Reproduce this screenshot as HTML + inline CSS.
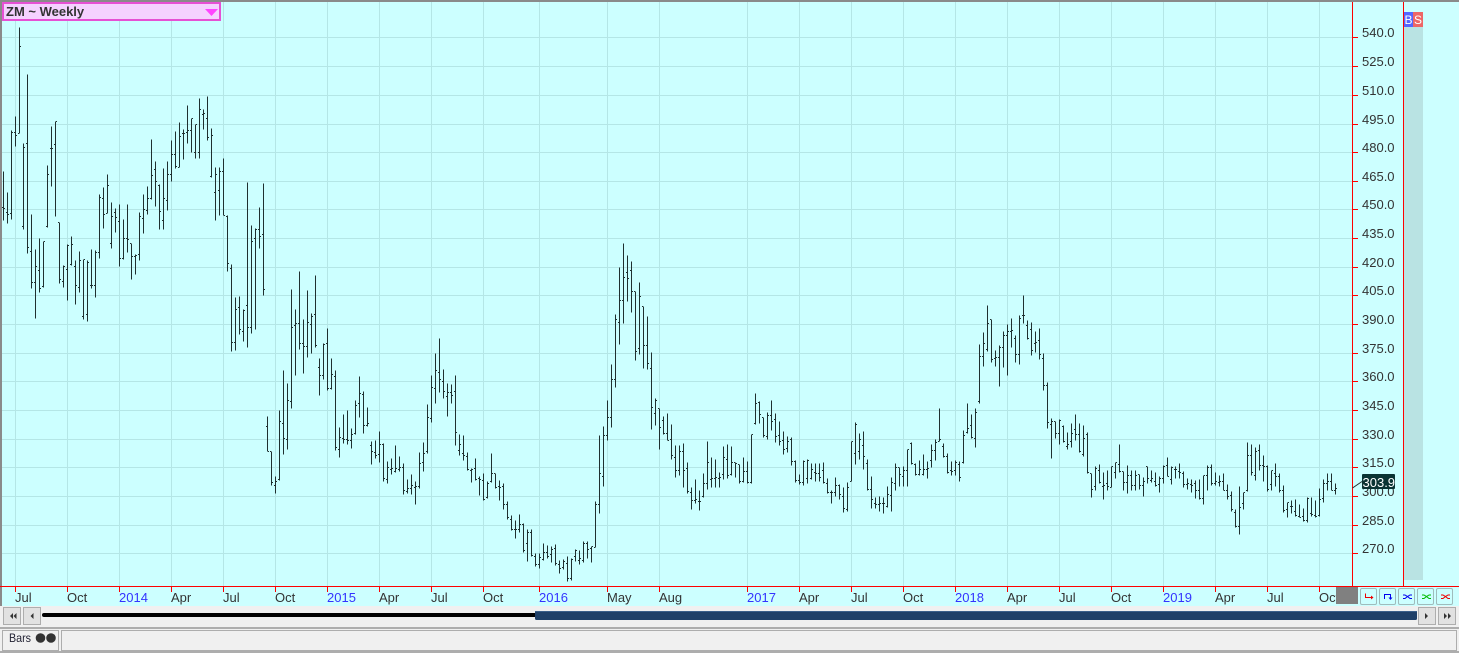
<!DOCTYPE html>
<html>
<head>
<meta charset="utf-8">
<title>ZM Weekly</title>
<style>
html,body{margin:0;padding:0;width:1459px;height:653px;overflow:hidden;background:#f0f0f0}
svg{display:block}
text{font-family:"Liberation Sans",sans-serif}
</style>
</head>
<body>
<svg width="1459" height="653" viewBox="0 0 1459 653" xmlns="http://www.w3.org/2000/svg">
<rect width="1459" height="653" fill="#f0f0f0"/>
<rect x="0" y="0" width="1459" height="606" fill="#ccffff"/>
<rect x="0" y="0" width="1459" height="2" fill="#8a8a8a"/>
<rect x="0" y="0" width="2" height="606" fill="#8a8a8a"/>
<path shape-rendering="crispEdges" stroke="#b4e6e6" stroke-width="1" fill="none" d="M15.5 2V586M67.5 2V586M119.5 2V586M171.5 2V586M223.5 2V586M275.5 2V586M327.5 2V586M379.5 2V586M431.5 2V586M483.5 2V586M539.5 2V586M607.5 2V586M659.5 2V586M747.5 2V586M799.5 2V586M851.5 2V586M903.5 2V586M955.5 2V586M1007.5 2V586M1059.5 2V586M1111.5 2V586M1163.5 2V586M1215.5 2V586M1267.5 2V586M1319.5 2V586M2 37.5H1352M2 66.5H1352M2 95.5H1352M2 124.5H1352M2 152.5H1352M2 181.5H1352M2 209.5H1352M2 238.5H1352M2 267.5H1352M2 295.5H1352M2 324.5H1352M2 353.5H1352M2 381.5H1352M2 410.5H1352M2 439.5H1352M2 467.5H1352M2 496.5H1352M2 525.5H1352M2 553.5H1352"/>
<g transform="translate(0,.5)">
<path shape-rendering="crispEdges" stroke="#1f2f2f" stroke-width="1" fill="none" d="M3.5 171V220M2 207h1M4 208h1M7.5 192V223M6 212h1M8 214h1M11.5 130V219M10 213h1M12 132h1M15.5 116V146M14 132h1M16 135h1M19.5 27V133M18 133h1M20 46h1M23.5 143V229M22 226h1M24 147h1M27.5 74V253M26 143h1M28 247h1M31.5 214V288M30 251h1M32 282h1M35.5 249V318M34 282h1M36 266h1M39.5 238V292M38 270h1M40 288h1M43.5 241V287M42 286h1M44 241h1M47.5 165V227M46 226h1M48 174h1M51.5 126V186M50 148h1M52 148h1M55.5 121V216M54 144h1M56 121h1M59.5 222V283M58 222h1M60 279h1M63.5 265V287M62 281h1M64 266h1M67.5 244V300M66 269h1M68 245h1M71.5 236V265M70 264h1M72 244h1M75.5 260V304M74 266h1M76 285h1M79.5 251V292M78 287h1M80 260h1M83.5 259V319M82 316h1M84 259h1M87.5 260V321M86 314h1M88 262h1M91.5 249V288M90 285h1M92 285h1M95.5 250V297M94 285h1M96 252h1M99.5 194V258M98 252h1M100 197h1M103.5 187V228M102 198h1M104 214h1M107.5 174V213M106 213h1M108 185h1M111.5 202V248M110 243h1M112 216h1M115.5 208V232M114 212h1M116 217h1M119.5 204V266M118 221h1M120 258h1M123.5 219V259M122 258h1M124 238h1M127.5 204V252M126 238h1M128 239h1M131.5 243V279M130 243h1M132 256h1M135.5 254V274M134 256h1M136 255h1M139.5 212V260M138 254h1M140 216h1M143.5 194V233M142 218h1M144 209h1M147.5 186V214M146 210h1M148 198h1M151.5 139V199M150 198h1M152 175h1M155.5 161V206M154 169h1M156 181h1M159.5 184V229M158 185h1M160 211h1M163.5 168V229M162 220h1M164 198h1M167.5 161V210M166 200h1M168 174h1M171.5 140V181M170 174h1M172 154h1M175.5 131V168M174 154h1M176 166h1M179.5 122V167M178 167h1M180 136h1M183.5 129V159M182 133h1M184 133h1M187.5 105V143M186 132h1M188 130h1M191.5 118V152M190 130h1M192 118h1M195.5 124V158M194 152h1M196 124h1M199.5 98V158M198 152h1M200 109h1M203.5 109V129M202 114h1M204 113h1M207.5 96V140M206 118h1M208 137h1M211.5 128V177M210 176h1M212 135h1M215.5 167V220M214 192h1M216 174h1M219.5 167V215M218 190h1M220 171h1M223.5 158V215M222 171h1M224 215h1M227.5 215V271M226 216h1M228 263h1M231.5 264V351M230 268h1M232 342h1M235.5 297V350M234 342h1M236 309h1M239.5 296V334M238 307h1M240 329h1M243.5 309V341M242 331h1M244 310h1M247.5 182V347M246 305h1M248 327h1M251.5 225V333M250 327h1M252 241h1M255.5 228V329M254 238h1M256 229h1M259.5 207V248M258 229h1M260 236h1M263.5 183V295M262 234h1M264 289h1M267.5 416V451M266 426h1M268 451h1M271.5 451V485M270 451h1M272 482h1M275.5 476V493M274 485h1M276 481h1M279.5 410V480M278 479h1M280 421h1M283.5 370V454M282 423h1M284 438h1M287.5 383V449M286 439h1M288 400h1M291.5 289V408M290 401h1M292 327h1M295.5 309V375M294 325h1M296 323h1M299.5 271V349M298 323h1M300 343h1M303.5 319V373M302 343h1M304 346h1M307.5 290V357M306 346h1M308 322h1M311.5 313V353M310 324h1M312 316h1M315.5 275V347M314 314h1M316 345h1M319.5 358V395M318 367h1M320 375h1M323.5 343V379M322 375h1M324 344h1M327.5 328V390M326 343h1M328 388h1M331.5 358V389M330 388h1M332 374h1M335.5 370V450M334 376h1M336 447h1M339.5 427V457M338 449h1M340 437h1M343.5 414V443M342 438h1M344 439h1M347.5 410V444M346 439h1M348 440h1M351.5 428V448M350 440h1M352 434h1M355.5 400V434M354 433h1M356 405h1M359.5 376V417M358 403h1M360 393h1M363.5 391V433M362 394h1M364 425h1M367.5 407V426M366 425h1M368 423h1M371.5 441V464M370 445h1M372 451h1M375.5 440V458M374 452h1M376 455h1M379.5 431V462M378 454h1M380 444h1M383.5 443V481M382 444h1M384 478h1M387.5 461V483M386 479h1M388 467h1M391.5 458V474M390 469h1M392 468h1M395.5 445V472M394 471h1M396 468h1M399.5 456V471M398 469h1M400 467h1M403.5 463V494M402 467h1M404 490h1M407.5 479V493M406 491h1M408 488h1M411.5 474V494M410 488h1M412 485h1M415.5 481V504M414 487h1M416 486h1M419.5 452V488M418 486h1M420 463h1M423.5 442V471M422 462h1M424 453h1M427.5 404V453M426 451h1M428 417h1M431.5 375V422M430 418h1M432 387h1M435.5 353V403M434 388h1M436 370h1M439.5 338V392M438 372h1M440 379h1M443.5 369V398M442 381h1M444 391h1M447.5 383V416M446 396h1M448 392h1M451.5 384V403M450 392h1M452 395h1M455.5 375V445M454 391h1M456 432h1M459.5 434V455M458 450h1M460 444h1M463.5 435V460M462 453h1M464 455h1M467.5 452V470M466 456h1M468 469h1M471.5 468V482M470 470h1M472 469h1M475.5 458V480M474 468h1M476 479h1M479.5 476V495M478 478h1M480 479h1M483.5 473V500M482 480h1M484 499h1M487.5 481V498M486 497h1M488 483h1M491.5 453V482M490 481h1M492 473h1M495.5 473V488M494 473h1M496 487h1M499.5 480V500M498 486h1M500 487h1M503.5 483V509M502 486h1M504 504h1M507.5 501V519M506 504h1M508 517h1M511.5 515V530M510 519h1M512 529h1M515.5 520V538M514 529h1M516 529h1M519.5 514V532M518 529h1M520 524h1M523.5 523V552M522 524h1M524 550h1M527.5 529V561M526 543h1M528 532h1M531.5 529V556M530 532h1M532 555h1M535.5 553V566M534 556h1M536 564h1M539.5 553V568M538 564h1M540 557h1M543.5 543V560M542 559h1M544 552h1M547.5 545V558M546 552h1M548 556h1M551.5 546V562M550 554h1M552 549h1M555.5 544V565M554 548h1M556 563h1M559.5 560V573M558 564h1M560 568h1M563.5 559V569M562 567h1M564 561h1M567.5 556V581M566 563h1M568 578h1M571.5 558V580M570 578h1M572 559h1M575.5 549V561M574 556h1M576 550h1M579.5 550V564M578 560h1M580 558h1M583.5 541V562M582 560h1M584 543h1M587.5 541V558M586 543h1M588 549h1M591.5 546V562M590 548h1M592 546h1M595.5 501V547M594 547h1M596 504h1M599.5 435V513M598 504h1M600 473h1M603.5 426V486M602 476h1M604 435h1M607.5 400V440M606 435h1M608 417h1M611.5 364V427M610 417h1M612 379h1M615.5 314V387M614 379h1M616 319h1M619.5 267V344M618 322h1M620 300h1M623.5 243V323M622 300h1M624 277h1M627.5 255V301M626 272h1M628 278h1M631.5 261V312M630 270h1M632 291h1M635.5 291V360M634 291h1M636 351h1M639.5 282V354M638 348h1M640 296h1M643.5 306V368M642 306h1M644 345h1M647.5 316V369M646 345h1M648 363h1M651.5 352V429M650 368h1M652 407h1M655.5 398V425M654 413h1M656 400h1M659.5 408V449M658 408h1M660 427h1M663.5 416V434M662 420h1M664 433h1M667.5 413V440M666 433h1M668 440h1M671.5 424V459M670 439h1M672 455h1M675.5 445V477M674 457h1M676 470h1M679.5 445V475M678 470h1M680 451h1M683.5 443V487M682 451h1M684 470h1M687.5 462V493M686 468h1M688 491h1M691.5 487V509M690 492h1M692 500h1M695.5 479V503M694 500h1M696 499h1M699.5 490V510M698 501h1M700 501h1M703.5 473V497M702 496h1M704 483h1M707.5 441V489M706 483h1M708 462h1M711.5 457V487M710 479h1M712 478h1M715.5 459V487M714 478h1M716 477h1M719.5 472V487M718 478h1M720 477h1M723.5 446V479M722 474h1M724 457h1M727.5 444V478M726 459h1M728 475h1M731.5 446V475M730 474h1M732 462h1M735.5 462V477M734 462h1M736 463h1M739.5 464V483M738 464h1M740 481h1M743.5 457V482M742 481h1M744 471h1M747.5 461V483M746 471h1M748 482h1M751.5 434V483M750 482h1M752 434h1M755.5 393V424M754 423h1M756 403h1M759.5 401V423M758 402h1M760 414h1M763.5 417V437M762 417h1M764 435h1M767.5 412V439M766 436h1M768 415h1M771.5 400V430M770 415h1M772 421h1M775.5 413V442M774 419h1M776 436h1M779.5 421V445M778 435h1M780 441h1M783.5 431V454M782 440h1M784 449h1M787.5 436V452M786 448h1M788 441h1M791.5 437V465M790 439h1M792 461h1M795.5 460V482M794 461h1M796 480h1M799.5 474V484M798 480h1M800 482h1M803.5 460V485M802 482h1M804 461h1M807.5 459V483M806 478h1M808 460h1M811.5 463V479M810 478h1M812 469h1M815.5 463V481M814 472h1M816 473h1M819.5 463V481M818 473h1M820 477h1M823.5 462V483M822 470h1M824 482h1M827.5 478V493M826 483h1M828 492h1M831.5 490V503M830 492h1M832 492h1M835.5 477V496M834 492h1M836 485h1M839.5 484V499M838 485h1M840 494h1M843.5 487V512M842 496h1M844 508h1M847.5 482V511M846 509h1M848 487h1M851.5 441V481M850 481h1M852 441h1M855.5 422V464M854 453h1M856 424h1M859.5 433V459M858 451h1M860 439h1M863.5 431V469M862 445h1M864 456h1M867.5 459V490M866 463h1M868 489h1M871.5 476V508M870 489h1M872 499h1M875.5 497V508M874 503h1M876 504h1M879.5 496V511M878 504h1M880 503h1M883.5 497V513M882 503h1M884 503h1M887.5 486V507M886 506h1M888 494h1M891.5 477V511M890 495h1M892 482h1M895.5 463V490M894 483h1M896 467h1M899.5 467V486M898 467h1M900 474h1M903.5 466V486M902 476h1M904 470h1M907.5 449V486M906 470h1M908 449h1M911.5 442V464M910 443h1M912 463h1M915.5 463V475M914 464h1M916 474h1M919.5 460V475M918 474h1M920 469h1M923.5 454V475M922 474h1M924 469h1M927.5 461V478M926 469h1M928 468h1M931.5 444V467M930 460h1M932 450h1M935.5 439V460M934 450h1M936 442h1M939.5 408V441M938 441h1M940 439h1M943.5 443V457M942 446h1M944 456h1M947.5 453V473M946 456h1M948 472h1M951.5 461V475M950 470h1M952 471h1M955.5 460V475M954 470h1M956 462h1M959.5 461V481M958 464h1M960 477h1M963.5 430V463M962 462h1M964 435h1M967.5 403V433M966 432h1M968 428h1M971.5 414V438M970 425h1M972 437h1M975.5 408V447M974 438h1M976 412h1M979.5 344V403M978 401h1M980 356h1M983.5 332V366M982 356h1M984 343h1M987.5 305V351M986 349h1M988 323h1M991.5 319V362M990 319h1M992 359h1M995.5 350V366M994 358h1M996 357h1M999.5 345V386M998 357h1M1000 347h1M1003.5 331V367M1002 347h1M1004 335h1M1007.5 324V375M1006 335h1M1008 331h1M1011.5 318V347M1010 331h1M1012 330h1M1015.5 335V362M1014 338h1M1016 354h1M1019.5 315V364M1018 354h1M1020 318h1M1023.5 295V323M1022 315h1M1024 315h1M1027.5 320V339M1026 325h1M1028 338h1M1031.5 322V355M1030 329h1M1032 350h1M1035.5 331V352M1034 343h1M1036 342h1M1039.5 328V359M1038 340h1M1040 354h1M1043.5 353V390M1042 358h1M1044 385h1M1047.5 382V428M1046 385h1M1048 422h1M1051.5 418V458M1050 424h1M1052 421h1M1055.5 421V438M1054 421h1M1056 433h1M1059.5 419V444M1058 433h1M1060 420h1M1063.5 425V442M1062 426h1M1064 441h1M1067.5 432V449M1066 446h1M1068 444h1M1071.5 423V447M1070 441h1M1072 433h1M1075.5 414V440M1074 429h1M1076 434h1M1079.5 423V452M1078 434h1M1080 451h1M1083.5 425V456M1082 454h1M1084 438h1M1087.5 432V473M1086 434h1M1088 472h1M1091.5 473V497M1090 473h1M1092 489h1M1095.5 466V490M1094 486h1M1096 468h1M1099.5 464V483M1098 470h1M1100 482h1M1103.5 472V499M1102 486h1M1104 485h1M1107.5 470V490M1106 483h1M1108 486h1M1111.5 466V487M1110 487h1M1112 466h1M1115.5 462V478M1114 472h1M1116 462h1M1119.5 444V472M1118 464h1M1120 471h1M1123.5 471V490M1122 471h1M1124 482h1M1127.5 465V493M1126 482h1M1128 475h1M1131.5 470V490M1130 475h1M1132 485h1M1135.5 470V490M1134 485h1M1136 475h1M1139.5 474V489M1138 474h1M1140 485h1M1143.5 477V496M1142 485h1M1144 481h1M1147.5 466V483M1146 466h1M1148 478h1M1151.5 470V482M1150 480h1M1152 478h1M1155.5 472V486M1154 481h1M1156 485h1M1159.5 476V492M1158 484h1M1160 478h1M1163.5 465V483M1162 478h1M1164 466h1M1167.5 457V476M1166 465h1M1168 476h1M1171.5 466V484M1170 479h1M1172 467h1M1175.5 466V478M1174 469h1M1176 469h1M1179.5 463V478M1178 471h1M1180 472h1M1183.5 471V487M1182 473h1M1184 484h1M1187.5 478V489M1186 484h1M1188 483h1M1191.5 479V492M1190 484h1M1192 485h1M1195.5 480V498M1194 483h1M1196 490h1M1199.5 479V499M1198 490h1M1200 498h1M1203.5 475V504M1202 498h1M1204 475h1M1207.5 465V490M1206 475h1M1208 467h1M1211.5 464V485M1210 467h1M1212 483h1M1215.5 472V485M1214 483h1M1216 481h1M1219.5 475V486M1218 482h1M1220 481h1M1223.5 473V490M1222 481h1M1224 490h1M1227.5 484V499M1226 490h1M1228 496h1M1231.5 491V511M1230 495h1M1232 509h1M1235.5 509V527M1234 512h1M1236 526h1M1239.5 486V534M1238 526h1M1240 507h1M1243.5 492V509M1242 503h1M1244 492h1M1247.5 442V491M1246 490h1M1248 455h1M1251.5 444V475M1250 455h1M1252 472h1M1255.5 447V480M1254 475h1M1256 451h1M1259.5 444V470M1258 450h1M1260 465h1M1263.5 455V481M1262 465h1M1264 466h1M1267.5 465V491M1266 466h1M1268 489h1M1271.5 470V490M1270 484h1M1272 470h1M1275.5 463V486M1274 473h1M1276 476h1M1279.5 473V492M1278 476h1M1280 490h1M1283.5 485V512M1282 490h1M1284 510h1M1287.5 502V517M1286 509h1M1288 502h1M1291.5 500V513M1290 506h1M1292 506h1M1295.5 499V516M1294 511h1M1296 515h1M1299.5 504V517M1298 516h1M1300 517h1M1303.5 508V521M1302 516h1M1304 520h1M1307.5 497V522M1306 520h1M1308 498h1M1311.5 497V516M1310 513h1M1312 514h1M1315.5 500V517M1314 515h1M1316 516h1M1319.5 488V516M1318 515h1M1320 499h1M1323.5 479V502M1322 498h1M1324 483h1M1327.5 473V490M1326 483h1M1328 481h1M1331.5 473V490M1330 481h1M1332 490h1M1335.5 483V494M1334 490h1M1336 488h1"/>
</g>
<path shape-rendering="crispEdges" stroke="#ff0000" stroke-width="1" fill="none" d="M1352.5 2V586M1403.5 2V586M0 586.5H1459M1352 37.5h6M1352 66.5h6M1352 95.5h6M1352 124.5h6M1352 152.5h6M1352 181.5h6M1352 209.5h6M1352 238.5h6M1352 267.5h6M1352 295.5h6M1352 324.5h6M1352 353.5h6M1352 381.5h6M1352 410.5h6M1352 439.5h6M1352 467.5h6M1352 496.5h6M1352 525.5h6M1352 553.5h6M15.5 587v5M67.5 587v5M119.5 587v5M171.5 587v5M223.5 587v5M275.5 587v5M327.5 587v5M379.5 587v5M431.5 587v5M483.5 587v5M539.5 587v5M607.5 587v5M659.5 587v5M747.5 587v5M799.5 587v5M851.5 587v5M903.5 587v5M955.5 587v5M1007.5 587v5M1059.5 587v5M1111.5 587v5M1163.5 587v5M1215.5 587v5M1267.5 587v5M1319.5 587v5"/>
<g font-size="13" fill="#333333">
<text x="1362" y="37">540.0</text>
<text x="1362" y="66">525.0</text>
<text x="1362" y="95">510.0</text>
<text x="1362" y="124">495.0</text>
<text x="1362" y="152">480.0</text>
<text x="1362" y="181">465.0</text>
<text x="1362" y="209">450.0</text>
<text x="1362" y="238">435.0</text>
<text x="1362" y="267">420.0</text>
<text x="1362" y="295">405.0</text>
<text x="1362" y="324">390.0</text>
<text x="1362" y="353">375.0</text>
<text x="1362" y="381">360.0</text>
<text x="1362" y="410">345.0</text>
<text x="1362" y="439">330.0</text>
<text x="1362" y="467">315.0</text>
<text x="1362" y="496">300.0</text>
<text x="1362" y="525">285.0</text>
<text x="1362" y="553">270.0</text>
</g>
<path d="M1352.5 488L1362 481.5" stroke="#1f2f2f" stroke-width="1" fill="none"/>
<rect x="1362" y="474" width="33" height="15" rx="1" fill="#0a3333"/>
<text x="1362.5" y="487" font-size="13" fill="#ffffff">303.9</text>
<rect x="1404" y="27" width="19" height="553" fill="#b9e3e3"/>
<rect x="1404" y="12" width="9" height="15" fill="#5566ff"/>
<rect x="1413" y="12" width="10" height="15" fill="#ee6666"/>
<text x="1404.5" y="24" font-size="12" fill="#ffffff">B</text>
<text x="1414" y="24" font-size="12" fill="#ffffff">S</text>
<g font-size="13" fill="#333333">
<text x="15" y="602">Jul</text>
<text x="67" y="602">Oct</text>
<text x="119" y="602" fill="#3333ff">2014</text>
<text x="171" y="602">Apr</text>
<text x="223" y="602">Jul</text>
<text x="275" y="602">Oct</text>
<text x="327" y="602" fill="#3333ff">2015</text>
<text x="379" y="602">Apr</text>
<text x="431" y="602">Jul</text>
<text x="483" y="602">Oct</text>
<text x="539" y="602" fill="#3333ff">2016</text>
<text x="607" y="602">May</text>
<text x="659" y="602">Aug</text>
<text x="747" y="602" fill="#3333ff">2017</text>
<text x="799" y="602">Apr</text>
<text x="851" y="602">Jul</text>
<text x="903" y="602">Oct</text>
<text x="955" y="602" fill="#3333ff">2018</text>
<text x="1007" y="602">Apr</text>
<text x="1059" y="602">Jul</text>
<text x="1111" y="602">Oct</text>
<text x="1163" y="602" fill="#3333ff">2019</text>
<text x="1215" y="602">Apr</text>
<text x="1267" y="602">Jul</text>
<text x="1319" y="602">Oct</text>
</g>
<rect x="1336" y="587" width="22" height="17" fill="#808080"/>
<g fill="#ccffff" stroke="#9fbcbc" stroke-width="1">
<rect x="1360.5" y="588.5" width="16" height="16" rx="1.5"/>
<rect x="1379.5" y="588.5" width="16" height="16" rx="1.5"/>
<rect x="1398.5" y="588.5" width="16" height="16" rx="1.5"/>
<rect x="1417.5" y="588.5" width="16" height="16" rx="1.5"/>
<rect x="1436.5" y="588.5" width="16" height="16" rx="1.5"/>
</g>
<path d="M1365.5 593.5V597.5H1371" stroke="#ee0000" fill="none"/>
<path d="M1371 595.5l2.5 2-2.5 2z" fill="#ee0000"/>
<path d="M1384.5 599V594.5H1390.5V598" stroke="#0000ee" fill="none"/>
<path d="M1388.5 597.5h4l-2 2.5z" fill="#0000ee"/>
<path d="M1403 595h2l2.5 1.5 2.5-1.5h2M1403 598.5h2l2.5-2 2.5 2h2" stroke="#0000ee" fill="none"/>
<path d="M1422 595h2l2.5 1.5 2.5-1.5h2M1422 598.5h2l2.5-2 2.5 2h2" stroke="#00bb00" fill="none"/>
<path d="M1441 595h2l2.5 1.5 2.5-1.5h2M1441 598.5h2l2.5-2 2.5 2h2" stroke="#ee0000" fill="none"/>
<rect x="3" y="3" width="217" height="17" fill="#f5d2ff" stroke="#e650d4" stroke-width="2"/>
<text x="6" y="16" font-size="13" font-weight="bold" fill="#333333">ZM ~ Weekly</text>
<path d="M205 9h13l-6.5 7z" fill="#ff44ff"/>
<rect x="0" y="606" width="1459" height="21" fill="#f0f0f0"/>
<g fill="#e1e1e1" stroke="#adadad" stroke-width="1">
<rect x="3.5" y="607.5" width="17" height="17"/>
<rect x="23.5" y="607.5" width="17" height="17"/>
<rect x="1418.5" y="607.5" width="17" height="17"/>
<rect x="1438.5" y="607.5" width="17" height="17"/>
</g>
<path d="M13 613v6l-3-3zM16.5 613v6l-3-3zM33.5 613v6l-3-3zM1425 613v6l3-3zM1444 613v6l3-3zM1448 613v6l3-3z" fill="#333333"/>
<rect x="42" y="613" width="500" height="4" rx="2" fill="#000000"/>
<rect x="535" y="611" width="882" height="9" rx="1.5" fill="#1f4068"/>
<rect x="535" y="611" width="882" height="1" fill="#3a5f8a"/>
<rect x="0" y="627" width="1459" height="2" fill="#adadad"/>
<rect x="0" y="629" width="1459" height="24" fill="#f0f0f0"/>
<rect x="2.5" y="630.5" width="56" height="20" fill="#f0f0f0" stroke="#adadad"/>
<rect x="61.5" y="630.5" width="1395" height="20" fill="#f0f0f0" stroke="#adadad"/>
<rect x="0" y="651" width="1459" height="2" fill="#adadad"/>
<text x="9" y="642" font-size="12" fill="#222233" textLength="22" lengthAdjust="spacingAndGlyphs">Bars</text>
<circle cx="40.5" cy="638" r="4.8" fill="#333333"/>
<circle cx="51" cy="638" r="4.8" fill="#333333"/>
</svg>
</body>
</html>
